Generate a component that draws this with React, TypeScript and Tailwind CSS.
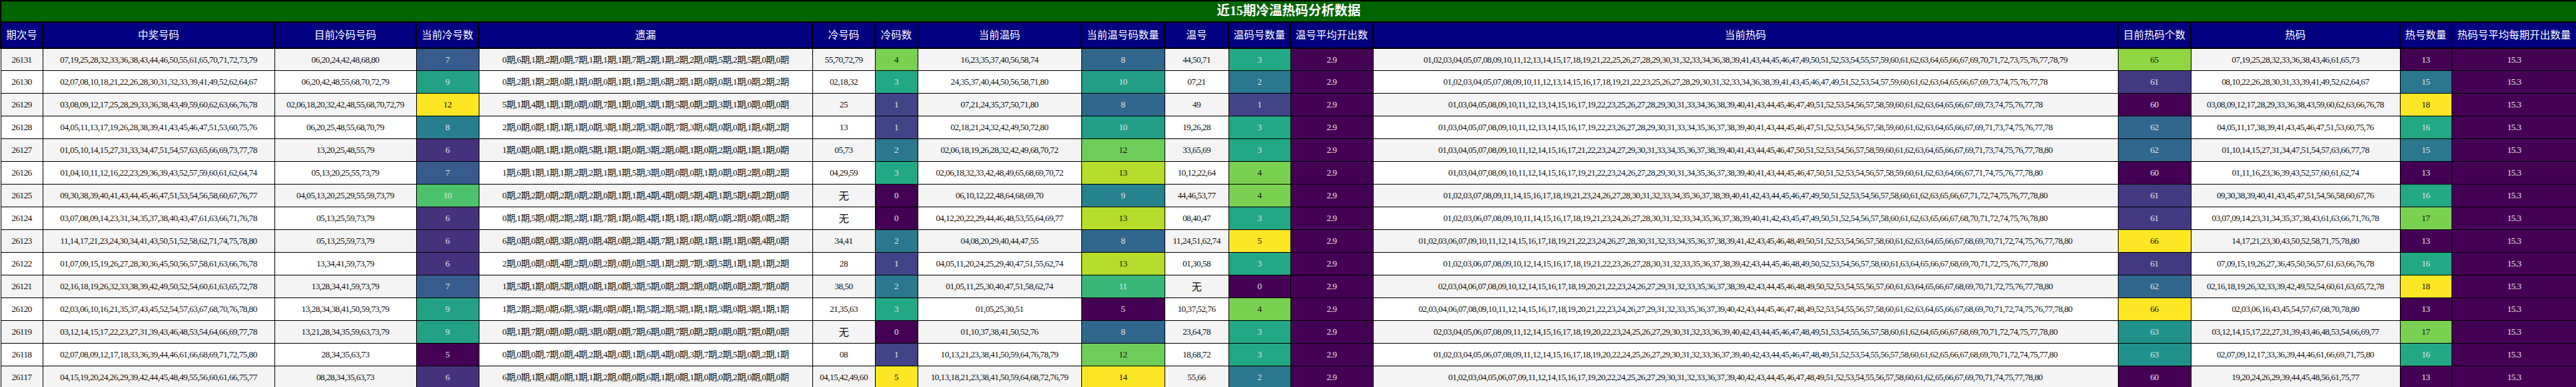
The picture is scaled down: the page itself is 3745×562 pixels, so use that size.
const widths = [61, 337, 206, 91, 485, 91, 62, 238, 121, 93, 90, 120, 1083, 106, 304, 75, 182];
const headers = ["期次号", "中奖号码", "目前冷码号码", "当前冷号数", "遗漏", "冷号码", "冷码数", "当前温码", "当前温号码数量", "温号", "温码号数量", "温号平均开出数", "当前热码", "目前热码个数", "热码", "热号数量", "热码号平均每期开出数量"];

type Row = { id: string; win: string; cold: string; coldNo: string; warm: string; warmNo: string; hot: string };

const rows: Row[] = [
  { id: "26131", win: "07,19,25,28,32,33,36,38,43,44,46,50,55,61,65,70,71,72,73,79", cold: "06,20,24,42,48,68,80", coldNo: "55,70,72,79", warm: "16,23,35,37,40,56,58,74", warmNo: "44,50,71", hot: "07,19,25,28,32,33,36,38,43,46,61,65,73" },
  { id: "26130", win: "02,07,08,10,18,21,22,26,28,30,31,32,33,39,41,49,52,62,64,67", cold: "06,20,42,48,55,68,70,72,79", coldNo: "02,18,32", warm: "24,35,37,40,44,50,56,58,71,80", warmNo: "07,21", hot: "08,10,22,26,28,30,31,33,39,41,49,52,62,64,67" },
  { id: "26129", win: "03,08,09,12,17,25,28,29,33,36,38,43,49,59,60,62,63,66,76,78", cold: "02,06,18,20,32,42,48,55,68,70,72,79", coldNo: "25", warm: "07,21,24,35,37,50,71,80", warmNo: "49", hot: "03,08,09,12,17,28,29,33,36,38,43,59,60,62,63,66,76,78" },
  { id: "26128", win: "04,05,11,13,17,19,26,28,38,39,41,43,45,46,47,51,53,60,75,76", cold: "06,20,25,48,55,68,70,79", coldNo: "13", warm: "02,18,21,24,32,42,49,50,72,80", warmNo: "19,26,28", hot: "04,05,11,17,38,39,41,43,45,46,47,51,53,60,75,76" },
  { id: "26127", win: "01,05,10,14,15,27,31,33,34,47,51,54,57,63,65,66,69,73,77,78", cold: "13,20,25,48,55,79", coldNo: "05,73", warm: "02,06,18,19,26,28,32,42,49,68,70,72", warmNo: "33,65,69", hot: "01,10,14,15,27,31,34,47,51,54,57,63,66,77,78" },
  { id: "26126", win: "01,04,10,11,12,16,22,23,29,36,39,43,52,57,59,60,61,62,64,74", cold: "05,13,20,25,55,73,79", coldNo: "04,29,59", warm: "02,06,18,32,33,42,48,49,65,68,69,70,72", warmNo: "10,12,22,64", hot: "01,11,16,23,36,39,43,52,57,60,61,62,74" },
  { id: "26125", win: "09,30,38,39,40,41,43,44,45,46,47,51,53,54,56,58,60,67,76,77", cold: "04,05,13,20,25,29,55,59,73,79", coldNo: "", warm: "06,10,12,22,48,64,68,69,70", warmNo: "44,46,53,77", hot: "09,30,38,39,40,41,43,45,47,51,54,56,58,60,67,76" },
  { id: "26124", win: "03,07,08,09,14,23,31,34,35,37,38,40,43,47,61,63,66,71,76,78", cold: "05,13,25,59,73,79", coldNo: "", warm: "04,12,20,22,29,44,46,48,53,55,64,69,77", warmNo: "08,40,47", hot: "03,07,09,14,23,31,34,35,37,38,43,61,63,66,71,76,78" },
  { id: "26123", win: "11,14,17,21,23,24,30,34,41,43,50,51,52,58,62,71,74,75,78,80", cold: "05,13,25,59,73,79", coldNo: "34,41", warm: "04,08,20,29,40,44,47,55", warmNo: "11,24,51,62,74", hot: "14,17,21,23,30,43,50,52,58,71,75,78,80" },
  { id: "26122", win: "01,07,09,15,19,26,27,28,30,36,45,50,56,57,58,61,63,66,76,78", cold: "13,34,41,59,73,79", coldNo: "28", warm: "04,05,11,20,24,25,29,40,47,51,55,62,74", warmNo: "01,30,58", hot: "07,09,15,19,26,27,36,45,50,56,57,61,63,66,76,78" },
  { id: "26121", win: "02,16,18,19,26,32,33,38,39,42,49,50,52,54,60,61,63,65,72,78", cold: "13,28,34,41,59,73,79", coldNo: "38,50", warm: "01,05,11,25,30,40,47,51,58,62,74", warmNo: "", hot: "02,16,18,19,26,32,33,39,42,49,52,54,60,61,63,65,72,78" },
  { id: "26120", win: "02,03,06,10,16,21,35,37,43,45,52,54,57,63,67,68,70,76,78,80", cold: "13,28,34,38,41,50,59,73,79", coldNo: "21,35,63", warm: "01,05,25,30,51", warmNo: "10,37,52,76", hot: "02,03,06,16,43,45,54,57,67,68,70,78,80" },
  { id: "26119", win: "03,12,14,15,17,22,23,27,31,39,43,46,48,53,54,64,66,69,77,78", cold: "13,21,28,34,35,59,63,73,79", coldNo: "", warm: "01,10,37,38,41,50,52,76", warmNo: "23,64,78", hot: "03,12,14,15,17,22,27,31,39,43,46,48,53,54,66,69,77" },
  { id: "26118", win: "02,07,08,09,12,17,18,33,36,39,44,46,61,66,68,69,71,72,75,80", cold: "28,34,35,63,73", coldNo: "08", warm: "10,13,21,23,38,41,50,59,64,76,78,79", warmNo: "18,68,72", hot: "02,07,09,12,17,33,36,39,44,46,61,66,69,71,75,80" },
  { id: "26117", win: "04,15,19,20,24,26,29,39,42,44,45,48,49,55,56,60,61,66,75,77", cold: "08,28,34,35,63,73", coldNo: "04,15,42,49,60", warm: "10,13,18,21,23,38,41,50,59,64,68,72,76,79", warmNo: "55,66", hot: "19,20,24,26,29,39,44,45,48,56,61,75,77" },
];

const stops = ["#440154", "#482475", "#414487", "#355f8d", "#2a788e", "#21918c", "#22a884", "#44bf70", "#7ad151", "#bddf26", "#fde725"];
const hex = (h: string) => [1, 3, 5].map((i) => parseInt(h.slice(i, i + 2), 16));
const viridis = (t: number) => {
  const x = Math.max(0, Math.min(1, t)) * (stops.length - 1);
  const i = Math.min(Math.floor(x), stops.length - 2);
  const f = x - i;
  const a = hex(stops[i]);
  const b = hex(stops[i + 1]);
  return `rgb(${a.map((v, k) => Math.round(v + (b[k] - v) * f)).join(",")})`;
};

const count = (s: string) => (s ? s.split(",").length : 0);
const pad = (n: number) => String(n).padStart(2, "0");

const missText = (seed: number) => {
  const out: string[] = [];
  let s = seed * 9301 + 49297;
  for (let i = 0; i < 20; i++) {
    s = (s * 9301 + 49297) % 233280;
    const r = s / 233280;
    out.push(`${r < 0.35 ? 0 : r < 0.6 ? 1 : r < 0.75 ? 2 : Math.floor(r * 20) - 12}期`);
  }
  return out.join(",");
};

const hotAll = (r: Row) => {
  const ex = new Set([...r.cold.split(","), ...r.warm.split(",")]);
  const out: string[] = [];
  for (let n = 1; n <= 80; n++) if (!ex.has(pad(n))) out.push(pad(n));
  return out;
};

const Heat = ({ v, min, max, text }: { v: number; min: number; max: number; text?: string }) => {
  const t = max === min ? 0 : (v - min) / (max - min);
  return (
    <td className="border border-black text-center" style={{ background: viridis(t), color: t > 0.72 ? "#111" : "#e4e4e4" }}>
      {text ?? v}
    </td>
  );
};

export default function App() {
  const data = rows.map((r, i) => {
    const hot = hotAll(r);
    return {
      ...r,
      coldCount: count(r.cold),
      coldNoCount: count(r.coldNo),
      warmCount: count(r.warm),
      warmNoCount: count(r.warmNo),
      hotText: hot.join(","),
      hotCount: hot.length,
      hotNoCount: count(r.hot),
      miss: missText(i + 3),
    };
  });
  const rng = (k: "coldCount" | "coldNoCount" | "warmCount" | "warmNoCount" | "hotCount" | "hotNoCount") => {
    const vs = data.map((d) => d[k]);
    return { min: Math.min(...vs), max: Math.max(...vs) };
  };
  const cc = rng("coldCount"), cn = rng("coldNoCount"), wc = rng("warmCount"), wn = rng("warmNoCount"), hc = rng("hotCount"), hn = rng("hotNoCount");

  return (
    <div className="w-[3745px] h-[562px] bg-white" style={{ fontFamily: '"Liberation Serif", "Noto Sans CJK SC", serif' }}>
      <table className="table-fixed border-collapse w-[3745px] text-[13px] tracking-[-0.6px] text-[#111]">
        <colgroup>
          {widths.map((w, i) => (
            <col key={i} style={{ width: w }} />
          ))}
        </colgroup>
        <thead>
          <tr className="h-[29px]">
            <th colSpan={17} className="bg-[#006400] border-2 border-black text-white text-[19px] font-bold text-center tracking-normal">
              近15期冷温热码分析数据
            </th>
          </tr>
          <tr className="h-[38px]">
            {headers.map((h) => (
              <th key={h} className="bg-[#000080] border-2 border-black text-white text-[15px] font-normal tracking-normal whitespace-nowrap" style={{ fontFamily: '"Noto Sans CJK SC", sans-serif' }}>
                {h}
              </th>
            ))}
          </tr>
        </thead>
        <tbody>
          {data.map((d, i) => {
            const bg = i % 2 === 0 ? "bg-[#f4f4f4]" : "bg-white";
            const td = `border border-black text-center whitespace-nowrap overflow-hidden ${bg}`;
            return (
              <tr key={d.id} className="h-[33px]">
                <td className={td}>{d.id}</td>
                <td className={td}>{d.win}</td>
                <td className={td}>{d.cold}</td>
                <Heat v={d.coldCount} {...cc} />
                <td className={td}>{d.miss}</td>
                <td className={td}>{d.coldNo || <span className="text-[15px]" style={{ fontFamily: '"Noto Sans CJK SC", sans-serif' }}>无</span>}</td>
                <Heat v={d.coldNoCount} {...cn} />
                <td className={td}>{d.warm}</td>
                <Heat v={d.warmCount} {...wc} />
                <td className={td}>{d.warmNo || <span className="text-[15px]" style={{ fontFamily: '"Noto Sans CJK SC", sans-serif' }}>无</span>}</td>
                <Heat v={d.warmNoCount} {...wn} />
                <Heat v={0} min={0} max={1} text="2.9" />
                <td className={td}>{d.hotText}</td>
                <Heat v={d.hotCount} {...hc} />
                <td className={td}>{d.hot}</td>
                <Heat v={d.hotNoCount} {...hn} />
                <Heat v={0} min={0} max={1} text="15.3" />
              </tr>
            );
          })}
        </tbody>
      </table>
    </div>
  );
}
